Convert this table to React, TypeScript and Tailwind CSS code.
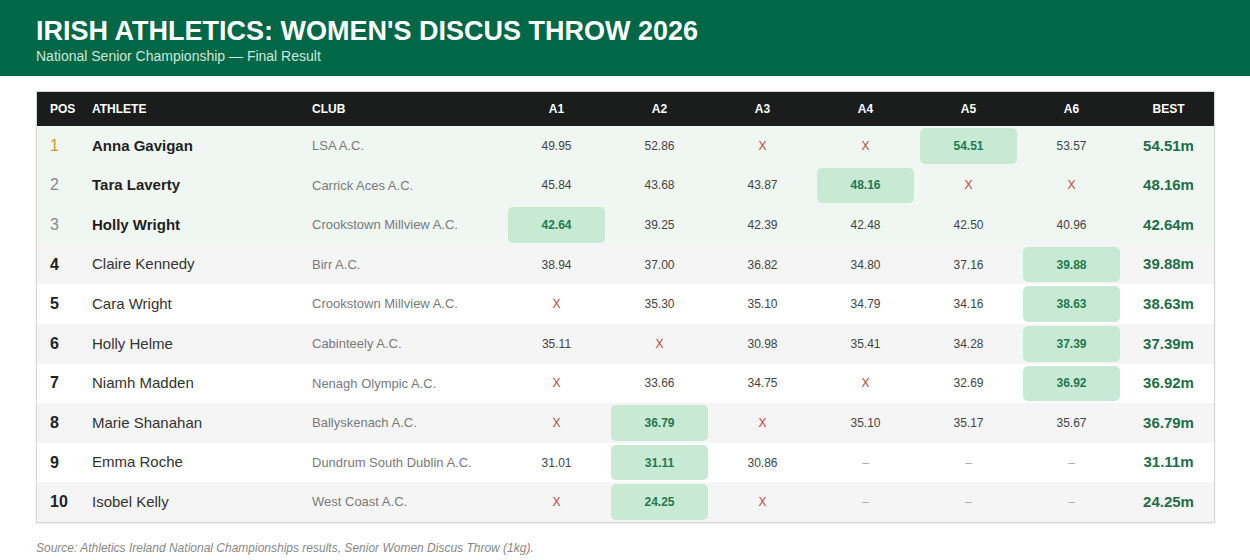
type Throw = string;

interface Row {
  pos: number;
  name: string;
  club: string;
  throws: Throw[];
  best: string;
  bestIdx: number;
}

const rows: Row[] = [
  { pos: 1, name: "Anna Gavigan", club: "LSA A.C.", throws: ["49.95", "52.86", "X", "X", "54.51", "53.57"], best: "54.51m", bestIdx: 4 },
  { pos: 2, name: "Tara Laverty", club: "Carrick Aces A.C.", throws: ["45.84", "43.68", "43.87", "48.16", "X", "X"], best: "48.16m", bestIdx: 3 },
  { pos: 3, name: "Holly Wright", club: "Crookstown Millview A.C.", throws: ["42.64", "39.25", "42.39", "42.48", "42.50", "40.96"], best: "42.64m", bestIdx: 0 },
  { pos: 4, name: "Claire Kennedy", club: "Birr A.C.", throws: ["38.94", "37.00", "36.82", "34.80", "37.16", "39.88"], best: "39.88m", bestIdx: 5 },
  { pos: 5, name: "Cara Wright", club: "Crookstown Millview A.C.", throws: ["X", "35.30", "35.10", "34.79", "34.16", "38.63"], best: "38.63m", bestIdx: 5 },
  { pos: 6, name: "Holly Helme", club: "Cabinteely A.C.", throws: ["35.11", "X", "30.98", "35.41", "34.28", "37.39"], best: "37.39m", bestIdx: 5 },
  { pos: 7, name: "Niamh Madden", club: "Nenagh Olympic A.C.", throws: ["X", "33.66", "34.75", "X", "32.69", "36.92"], best: "36.92m", bestIdx: 5 },
  { pos: 8, name: "Marie Shanahan", club: "Ballyskenach A.C.", throws: ["X", "36.79", "X", "35.10", "35.17", "35.67"], best: "36.79m", bestIdx: 1 },
  { pos: 9, name: "Emma Roche", club: "Dundrum South Dublin A.C.", throws: ["31.01", "31.11", "30.86", "–", "–", "–"], best: "31.11m", bestIdx: 1 },
  { pos: 10, name: "Isobel Kelly", club: "West Coast A.C.", throws: ["X", "24.25", "X", "–", "–", "–"], best: "24.25m", bestIdx: 1 },
];

const grid = "grid grid-cols-[45px_220px_203px_repeat(6,103px)_1fr] items-center";

function posClass(pos: number) {
  if (pos === 1) return "text-[#c9a22a] font-normal";
  if (pos <= 3) return "text-[#8a8a8a] font-normal";
  return "text-[#222] font-bold";
}

function rowBg(i: number) {
  if (i < 3) return "bg-[#f0f6f2]";
  return i % 2 === 1 ? "bg-[#f5f5f5]" : "bg-white";
}

function ThrowCell({ value, best }: { value: Throw; best: boolean }) {
  if (best) {
    return (
      <div className="h-full px-[3px] py-[2px]">
        <div className="h-full rounded-[5px] bg-[#c8e9d4] flex items-center justify-center text-[12px] font-bold text-[#1e7a4e]">
          {value}
        </div>
      </div>
    );
  }
  if (value === "X") {
    return <div className="text-center text-[12px] text-[#c0463c]">X</div>;
  }
  if (value === "–") {
    return <div className="text-center text-[12px] text-[#aaa]">–</div>;
  }
  return <div className="text-center text-[12px] text-[#444]">{value}</div>;
}

export default function App() {
  return (
    <div className="w-[1250px] h-[560px] bg-white font-['Liberation_Sans',Arial,sans-serif]">
      <header className="h-[76px] bg-[#006846] px-[36px] pt-[15px]">
        <h1 className="text-[27px] leading-[32px] font-bold text-white">
          IRISH ATHLETICS: WOMEN'S DISCUS THROW 2026
        </h1>
        <p className="text-[14px] leading-[18px] text-[#cfe6da]">
          National Senior Championship — Final Result
        </p>
      </header>

      <div className="mx-[36px] mt-[15px] w-[1179px] border border-[#d6d6d6] shadow-[0_1px_2px_rgba(0,0,0,0.08)]">
        <div className={`${grid} h-[34px] bg-[#1b1d1d] text-white text-[12px] font-bold`}>
          <div className="pl-[13px]">POS</div>
          <div className="pl-[10px]">ATHLETE</div>
          <div className="pl-[10px]">CLUB</div>
          {["A1", "A2", "A3", "A4", "A5", "A6"].map((a) => (
            <div key={a} className="text-center">{a}</div>
          ))}
          <div className="text-center">BEST</div>
        </div>
        {rows.map((r, i) => (
          <div key={r.pos} className={`${grid} h-[39.6px] ${rowBg(i)}`}>
            <div className={`pl-[13px] text-[16px] ${posClass(r.pos)}`}>{r.pos}</div>
            <div className={`pl-[10px] text-[15px] ${r.pos <= 3 ? "font-bold text-[#1f1f1f]" : "text-[#333]"}`}>
              {r.name}
            </div>
            <div className="pl-[10px] text-[13px] text-[#7a7a7a]">{r.club}</div>
            {r.throws.map((t, k) => (
              <ThrowCell key={k} value={t} best={k === r.bestIdx} />
            ))}
            <div className="text-center text-[15px] font-bold text-[#1e6e4a]">{r.best}</div>
          </div>
        ))}
      </div>

      <p className="mx-[36px] mt-[16px] text-[12px] italic text-[#888]">
        Source: Athletics Ireland National Championships results, Senior Women Discus Throw (1kg).
      </p>
    </div>
  );
}
